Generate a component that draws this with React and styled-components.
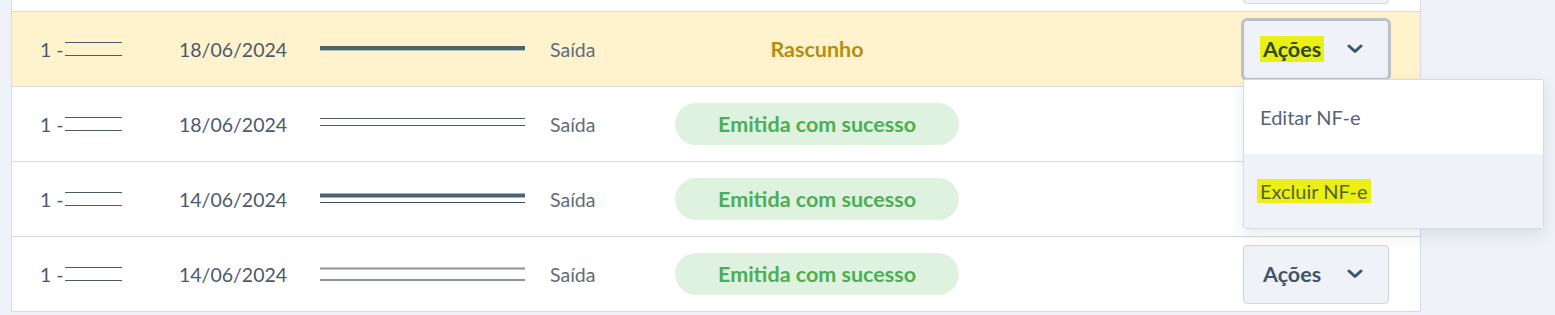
import styled, { createGlobalStyle } from "styled-components";

const GlobalStyle = createGlobalStyle`
  html, body {
    margin: 0;
    padding: 0;
    background: #eff2f8;
    font-family: Lato, "Open Sans", sans-serif;
    overflow: hidden;
  }
`;

const Page = styled.div`
  padding-left: 11px;
  width: 1555px;
  height: 315px;
  box-sizing: border-box;
  overflow: hidden;
`;

const Table = styled.div`
  width: 1410px;
  margin-top: -63px;
  background: #fff;
  border-left: 1px solid #d5dbe4;
  border-right: 1px solid #d5dbe4;
  box-sizing: border-box;
`;

const Row = styled.div`
  display: grid;
  grid-template-columns: 167px 141px 230px 125px 568px 1fr;
  align-items: center;
  height: 75px;
  box-sizing: border-box;
  border-bottom: 1px solid #d6d9dd;
  background: ${(p) => (p.$draft ? "#fff3cd" : "#fff")};
`;

const Cell = styled.div`
  display: flex;
  align-items: center;
  font-size: 19.5px;
  color: ${(p) => (p.$muted ? "#5f6d7b" : "#4a5a6b")};
  padding-left: ${(p) => p.$pad || 0}px;
  position: relative;
  height: 100%;
`;

const Number = styled.span`
  margin-right: 1px;
`;

const Badge = styled.div`
  width: 284px;
  height: 42px;
  border-radius: 21px;
  display: flex;
  align-items: center;
  justify-content: center;
  font-weight: 700;
  font-size: 21.5px;
  background: ${(p) => (p.$kind === "ok" ? "#dff1df" : "transparent")};
  color: ${(p) => (p.$kind === "ok" ? "#4cae55" : "#b48e12")};
`;

const ActionButton = styled.button`
  width: 146px;
  height: 59px;
  box-sizing: border-box;
  background: #eff3f8;
  border: 1px solid ${(p) => (p.$open ? "#b9bec4" : "#cfd6df")};
  box-shadow: ${(p) => (p.$open ? "0 0 0 2px #bfc3c8" : "none")};
  border-radius: 4px;
  display: flex;
  align-items: center;
  padding: 0 0 0 19px;
  font-family: inherit;
  font-size: 21.5px;
  font-weight: 700;
  color: #3c5670;
  cursor: pointer;
`;

const ButtonLabel = styled.span`
  width: 84px;
  text-align: left;
`;

const Mark = styled.mark`
  background: #ebef16;
  color: ${(p) => p.$tone || "#2f4a22"};
  padding: 0 3px;
  margin-left: -3px;
`;

const Menu = styled.div`
  position: absolute;
  top: 67px;
  left: 0;
  width: 299px;
  background: #fff;
  border: 1px solid #d5dbe4;
  border-radius: 3px;
  box-shadow: 0 6px 16px rgba(60, 80, 110, 0.12);
  z-index: 2;
  overflow: hidden;
`;

const MenuItem = styled.div`
  height: 74px;
  display: flex;
  align-items: center;
  padding-left: 16px;
  font-size: 20px;
  color: #566575;
  background: ${(p) => (p.$hover ? "#eff2f7" : "#fff")};
`;

const Chevron = () => (
  <svg width="16" height="10" viewBox="0 0 16 10">
    <polyline
      points="2,2 8,7.5 14,2"
      fill="none"
      stroke="#3c5670"
      strokeWidth="3"
      strokeLinecap="round"
      strokeLinejoin="round"
    />
  </svg>
);

const ShortScribble = () => (
  <svg width="57" height="16" viewBox="0 0 57 16">
    <defs>
      <linearGradient id="fade" x1="0" x2="1">
        <stop offset="0" stopColor="#4a5a6b" stopOpacity="0.15" />
        <stop offset="0.4" stopColor="#4a5a6b" stopOpacity="1" />
      </linearGradient>
    </defs>
    <line x1="0" x2="57" y1="1.5" y2="1.5" stroke="#4a5a6b" strokeWidth="1.2" />
    <line x1="0" x2="57" y1="5.5" y2="5.5" stroke="url(#fade)" strokeWidth="1.2" />
    <line x1="0" x2="57" y1="14.5" y2="14.5" stroke="#4a5a6b" strokeWidth="1.2" />
  </svg>
);

const longLines = {
  thick: [{ y: 7, w: 4, c: "#52626a" }, { y: 9.5, w: 1, c: "#a9c7b8" }],
  pair: [{ y: 2.5, w: 1, c: "#4a5a6b" }, { y: 9.5, w: 1, c: "#4a5a6b" }],
  mixed: [{ y: 4.5, w: 4, c: "#4e6276" }, { y: 11.5, w: 1, c: "#3f5060" }],
  grey: [{ y: 2.5, w: 2, c: "#8a949c" }, { y: 14, w: 2, c: "#8a949c" }],
};

const LongScribble = ({ kind }) => (
  <svg width="205" height="17" viewBox="0 0 205 17">
    {longLines[kind].map((l, i) => (
      <line key={i} x1="0" x2="205" y1={l.y} y2={l.y} stroke={l.c} strokeWidth={l.w} />
    ))}
  </svg>
);

// first row only peeks in at the top edge: just the bottom of its button shows
const rows = [
  { partial: true },
  { date: "18/06/2024", line: "thick", status: "draft", open: true },
  { date: "18/06/2024", line: "pair", status: "ok" },
  { date: "14/06/2024", line: "mixed", status: "ok" },
  { date: "14/06/2024", line: "grey", status: "ok", button: true },
];

export default function App() {
  return (
    <Page>
      <GlobalStyle />
      <Table>
        {rows.map((r, i) =>
          r.partial ? (
            <Row key={i}>
              <Cell />
              <Cell />
              <Cell />
              <Cell />
              <Cell />
              <Cell>
                <ActionButton />
              </Cell>
            </Row>
          ) : (
            <Row key={i} $draft={r.status === "draft"}>
              <Cell $pad={28}>
                <Number>1 -</Number>
                <ShortScribble />
              </Cell>
              <Cell>{r.date}</Cell>
              <Cell>
                <LongScribble kind={r.line} />
              </Cell>
              <Cell $muted>Saída</Cell>
              <Cell>
                <Badge $kind={r.status}>
                  {r.status === "ok" ? "Emitida com sucesso" : "Rascunho"}
                </Badge>
              </Cell>
              <Cell>
                {(r.open || r.button) && (
                  <ActionButton $open={r.open}>
                    <ButtonLabel>
                      {r.open ? <Mark>Ações</Mark> : "Ações"}
                    </ButtonLabel>
                    <Chevron />
                  </ActionButton>
                )}
                {r.open && (
                  <Menu>
                    <MenuItem>Editar NF-e</MenuItem>
                    <MenuItem $hover>
                      <Mark $tone="#55652a">Excluir NF-e</Mark>
                    </MenuItem>
                  </Menu>
                )}
              </Cell>
            </Row>
          )
        )}
      </Table>
    </Page>
  );
}
